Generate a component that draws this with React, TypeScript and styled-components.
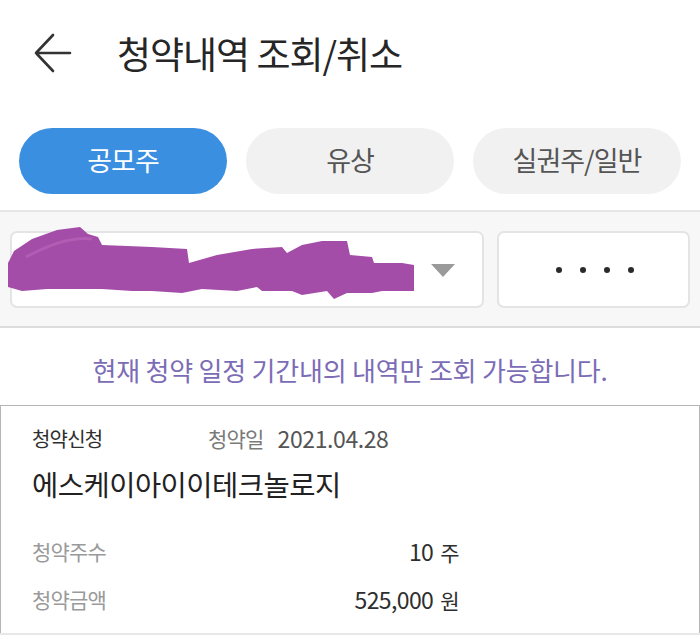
import React from "react";
import styled, { createGlobalStyle } from "styled-components";

const Global = createGlobalStyle`
  html, body { margin: 0; padding: 0; background: #ffffff; }
  body { font-family: "Noto Sans CJK KR", "Noto Sans", sans-serif; }
  * { box-sizing: border-box; }
`;

const Page = styled.div`
  width: 700px;
  height: 639px;
  overflow: hidden;
  background: #fff;
  display: flex;
  flex-direction: column;
`;

const Header = styled.header`
  height: 110px;
  display: flex;
  align-items: center;
  padding: 0 0 4px 34px;
  gap: 45px;
`;

const BackButton = styled.button`
  width: 38px;
  height: 42px;
  border: 0;
  padding: 0;
  background: transparent;
  display: flex;
  align-items: center;
  justify-content: center;
`;

const Title = styled.h1`
  margin: 0;
  font-size: 37px;
  font-weight: 400;
  letter-spacing: -1px;
  color: #262626;
  line-height: 1;
`;

const TabRow = styled.div`
  display: grid;
  grid-template-columns: repeat(3, 208px);
  column-gap: 19px;
  padding: 18px 20px 16px 19px;
`;

const Tab = styled.button<{ $active?: boolean }>`
  height: 66px;
  border: 0;
  border-radius: 33px;
  background: ${(p) => (p.$active ? "#3a8fe0" : "#f1f1f1")};
  color: ${(p) => (p.$active ? "#ffffff" : "#555555")};
  font-family: "Noto Sans CJK KR", sans-serif;
  font-size: 27px;
  letter-spacing: -1px;
  padding: 0 0 4px;
`;

const FilterBar = styled.div`
  background: #f7f7f7;
  border-top: 2px solid #e6e6e6;
  border-bottom: 2px solid #dcdcdc;
  padding: 19px 10px 18px 10px;
  display: grid;
  grid-template-columns: 474px 193px;
  column-gap: 13px;
`;

const InputBox = styled.div`
  position: relative;
  height: 77px;
  background: #fff;
  border: 2px solid #e4e4e4;
  border-radius: 7px;
  display: flex;
  align-items: center;
`;

const SelectBox = styled(InputBox)`
  justify-content: flex-end;
  padding-right: 27px;
`;

const PasswordBox = styled(InputBox)`
  justify-content: center;
  gap: 18px;
  padding-left: 2px;
`;

const Dot = styled.span`
  width: 6px;
  height: 6px;
  border-radius: 50%;
  background: #2a2a2a;
`;

const Caret = styled.span`
  width: 0;
  height: 0;
  border-left: 12px solid transparent;
  border-right: 12px solid transparent;
  border-top: 13px solid #9a9a9a;
  margin-top: 1px;
`;

const Scribble = styled.svg`
  position: absolute;
  left: -6px;
  top: -6px;
  width: 412px;
  height: 74px;
`;

const Notice = styled.p`
  margin: 0;
  height: 77px;
  display: flex;
  align-items: center;
  justify-content: center;
  color: #7b6cb6;
  font-size: 26px;
  letter-spacing: -0.2px;
  padding-top: 6px;
`;

const Card = styled.section`
  flex: 1;
  border-top: 1px solid #b5b5b5;
  border-left: 1px solid #b5b5b5;
  border-right: 1px solid #b5b5b5;
  display: flex;
  flex-direction: column;
  padding: 17px 0 0 31px;
`;

const CardFooterLine = styled.div`
  height: 2px;
  background: #e8e8e8;
`;

const Spacer = styled.div`
  height: 4px;
`;

const MetaRow = styled.div`
  height: 30px;
  display: flex;
  align-items: center;
`;

const MetaTitle = styled.span`
  width: 176px;
  font-size: 20px;
  color: #2e2e2e;
  letter-spacing: -0.8px;
`;

const MetaLabel = styled.span`
  font-size: 21px;
  color: #7a7a7a;
  letter-spacing: -0.8px;
  margin-right: 14px;
`;

const MetaDate = styled.span`
  font-size: 23px;
  color: #555;
  letter-spacing: -0.4px;
`;

const Name = styled.div`
  margin-top: 10px;
  height: 40px;
  display: flex;
  align-items: center;
  font-size: 28.5px;
  color: #222;
  letter-spacing: -0.5px;
`;

const Details = styled.div`
  margin-top: 30px;
  width: 427px;
  display: flex;
  flex-direction: column;
  gap: 12px;
`;

const DetailRow = styled.div`
  height: 36px;
  display: flex;
  align-items: center;
  justify-content: space-between;
`;

const DetailLabel = styled.span`
  font-size: 21px;
  color: #9a9a9a;
  letter-spacing: -0.8px;
`;

const DetailValue = styled.span`
  font-size: 23px;
  color: #2e2e2e;
  letter-spacing: -0.6px;
  display: flex;
  align-items: baseline;
  gap: 7px;
`;

const Unit = styled.span`
  font-size: 21px;
`;

export default function App() {
  return (
    <Page>
      <Global />
      <Header>
        <BackButton aria-label="back">
          <svg width="38" height="42" viewBox="0 0 38 42" fill="none">
            <path
              d="M19 3 L2 21 L19 39 M2 21 H36"
              stroke="#333"
              strokeWidth="2.6"
              strokeLinecap="round"
              strokeLinejoin="round"
            />
          </svg>
        </BackButton>
        <Title>청약내역 조회/취소</Title>
      </Header>

      <TabRow>
        <Tab $active>공모주</Tab>
        <Tab>유상</Tab>
        <Tab>실권주/일반</Tab>
      </TabRow>

      <FilterBar>
        <SelectBox>
          <Scribble viewBox="0 0 412 74">
            <path
              d="M2 36 L8 24 L26 12 L51 3 L74 0 L82 7 L92 10 L96 18 L146 20 L181 22 L183 36 L211 28 L246 22 L276 20 L281 26 L296 18 L316 14 L341 14 L344 28 L366 30 L368 36 L396 36 L408 38 L408 64 L396 64 L376 64 L366 66 L341 66 L328 72 L321 64 L296 68 L286 64 L256 64 L251 60 L231 64 L196 62 L176 66 L146 64 L126 64 L96 62 L66 62 L41 62 L16 64 L2 60 Z"
              fill="#a34ca8"
            />
            <path
              d="M20 30 C50 14 70 10 86 12"
              stroke="#b565b8"
              strokeWidth="3"
              fill="none"
              opacity="0.7"
            />
          </Scribble>
          <Caret />
        </SelectBox>
        <PasswordBox>
          <Dot />
          <Dot />
          <Dot />
          <Dot />
        </PasswordBox>
      </FilterBar>

      <Notice>현재 청약 일정 기간내의 내역만 조회 가능합니다.</Notice>

      <Card>
        <MetaRow>
          <MetaTitle>청약신청</MetaTitle>
          <MetaLabel>청약일</MetaLabel>
          <MetaDate>2021.04.28</MetaDate>
        </MetaRow>
        <Name>에스케이아이이테크놀로지</Name>
        <Details>
          <DetailRow>
            <DetailLabel>청약주수</DetailLabel>
            <DetailValue>
              10<Unit>주</Unit>
            </DetailValue>
          </DetailRow>
          <DetailRow>
            <DetailLabel>청약금액</DetailLabel>
            <DetailValue>
              525,000<Unit>원</Unit>
            </DetailValue>
          </DetailRow>
        </Details>
      </Card>
      <CardFooterLine />
      <Spacer />
    </Page>
  );
}
